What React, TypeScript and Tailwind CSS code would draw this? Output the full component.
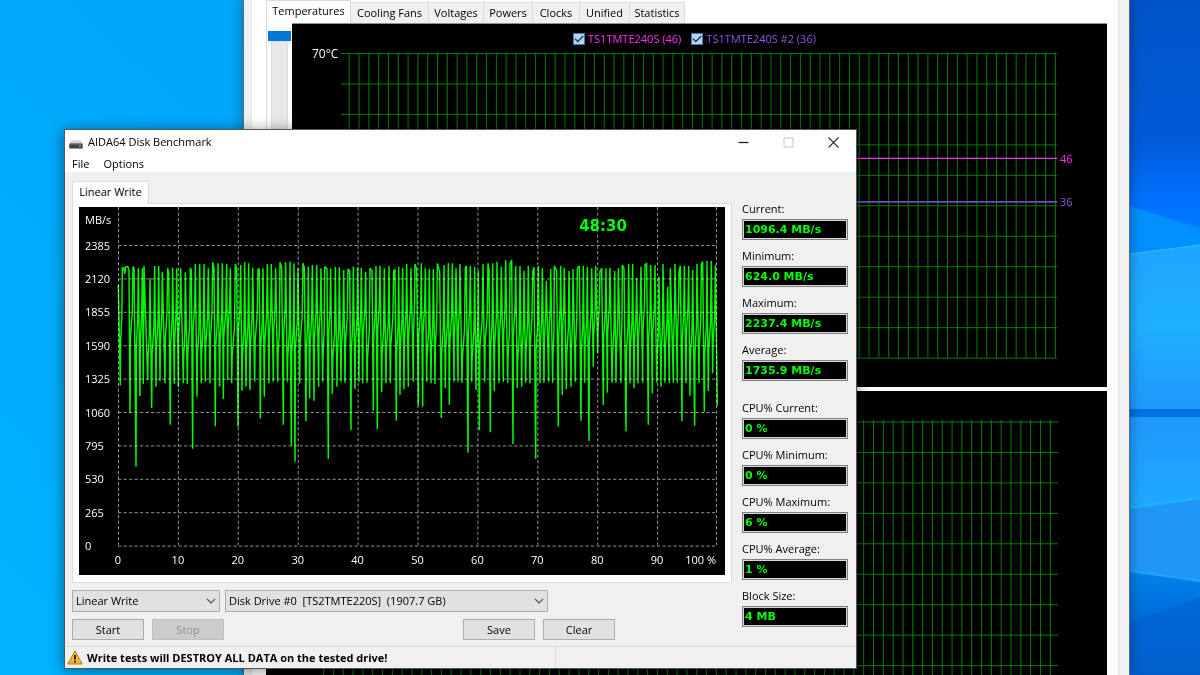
import { ReactNode } from "react"

type Point = [number, number]

const sensorTabs = [
  { name: "Cooling Fans", width: "w-[78px]" },
  { name: "Voltages", width: "w-[55px]" },
  { name: "Powers", width: "w-[49px]" },
  { name: "Clocks", width: "w-[47px]" },
  { name: "Unified", width: "w-[50px]" },
  { name: "Statistics", width: "w-[55px]" },
]

const speedStats = [
  { label: "Current:", value: "1096.4 MB/s" },
  { label: "Minimum:", value: "624.0 MB/s" },
  { label: "Maximum:", value: "2237.4 MB/s" },
  { label: "Average:", value: "1735.9 MB/s" },
]

const cpuStats = [
  { label: "CPU% Current:", value: "0 %" },
  { label: "CPU% Minimum:", value: "0 %" },
  { label: "CPU% Maximum:", value: "6 %" },
  { label: "CPU% Average:", value: "1 %" },
  { label: "Block Size:", value: "4 MB" },
]

const speedLabels = [2385, 2120, 1855, 1590, 1325, 1060, 795, 530, 265, 0]
const percentLabels = [0, 10, 20, 30, 40, 50, 60, 70, 80, 90]

// write speed samples, three units per chart pixel
const lows: Point[] = [
  [181, 556], [210, 638], [228, 800], [240, 588], [250, 552], [263, 540], [275, 624], [288, 560],
  [300, 543], [315, 550], [331, 674], [343, 552], [355, 560], [370, 550], [382, 552], [398, 746],
  [411, 590], [424, 550], [436, 545], [450, 550], [466, 679], [479, 560], [490, 597], [503, 540],
  [515, 550], [534, 680], [546, 572], [558, 560], [570, 570], [584, 545], [601, 656], [613, 590],
  [627, 550], [640, 545], [653, 545], [670, 674], [682, 545], [694, 738], [705, 785], [719, 550],
  [738, 664], [749, 595], [762, 602], [776, 560], [788, 545], [805, 776], [817, 582], [831, 560],
  [843, 545], [855, 548], [873, 690], [885, 567], [897, 545], [908, 550], [921, 548], [940, 632],
  [952, 687], [965, 576], [978, 550], [991, 548], [1009, 662], [1020, 585], [1032, 568], [1045, 560],
  [1060, 545], [1075, 617], [1088, 620], [1100, 545], [1113, 550], [1125, 552], [1144, 654],
  [1156, 565], [1168, 614], [1182, 545], [1194, 545], [1206, 548], [1224, 758], [1235, 545],
  [1248, 570], [1258, 690], [1274, 545], [1291, 697], [1303, 573], [1317, 548], [1330, 545],
  [1343, 548], [1359, 732], [1372, 564], [1385, 560], [1397, 548], [1410, 550], [1427, 776],
  [1440, 550], [1452, 548], [1466, 545], [1478, 548], [1495, 680], [1507, 585], [1519, 568],
  [1533, 560], [1546, 545], [1563, 662], [1574, 548], [1587, 723], [1600, 500], [1613, 460],
  [1630, 615], [1642, 578], [1656, 548], [1668, 548], [1683, 548], [1698, 694], [1710, 550],
  [1722, 565], [1734, 550], [1748, 548], [1765, 674], [1777, 580], [1790, 548], [1803, 560],
  [1815, 548], [1828, 548], [1840, 548], [1852, 548], [1866, 664], [1878, 550], [1890, 587],
  [1904, 677], [1917, 548], [1933, 635], [1945, 573], [1958, 520], [1972, 617],
]

const highs: Point[] = [
  [175, 255], [187, 204], [191, 203], [194, 222], [197, 200], [204, 200], [207, 212], [219, 200],
  [222, 203], [235, 205], [247, 205], [252, 198], [270, 235], [284, 198], [296, 198], [307, 215],
  [323, 205], [326, 218], [338, 203], [350, 205], [362, 205], [376, 217], [391, 203], [394, 212],
  [406, 192], [419, 192], [432, 192], [445, 205], [458, 187], [462, 205], [474, 190], [487, 190],
  [500, 192], [511, 205], [526, 192], [530, 206], [542, 195], [554, 187], [566, 190], [578, 203],
  [594, 207], [598, 207], [609, 205], [622, 192], [634, 192], [647, 205], [660, 187], [665, 203],
  [677, 187], [690, 185], [702, 190], [714, 205], [729, 190], [733, 203], [745, 200], [757, 195],
  [770, 195], [783, 205], [794, 200], [801, 206], [812, 205], [826, 200], [838, 202], [851, 210],
  [864, 207], [869, 212], [880, 200], [893, 202], [904, 203], [917, 215], [930, 205], [936, 212],
  [948, 198], [960, 198], [973, 205], [987, 198], [1001, 213], [1005, 208], [1016, 200],
  [1028, 203], [1040, 192], [1053, 205], [1065, 192], [1070, 207], [1084, 190], [1096, 205],
  [1108, 207], [1120, 207], [1132, 190], [1139, 215], [1152, 195], [1165, 190], [1177, 190],
  [1188, 205], [1200, 192], [1216, 203], [1219, 198], [1231, 198], [1244, 200], [1255, 212],
  [1269, 192], [1284, 190], [1287, 210], [1298, 190], [1311, 185], [1324, 200], [1337, 180],
  [1350, 190], [1355, 180], [1367, 198], [1380, 198], [1392, 212], [1405, 198], [1418, 215],
  [1422, 202], [1435, 198], [1447, 205], [1459, 243], [1472, 207], [1483, 198], [1490, 212],
  [1502, 198], [1513, 203], [1527, 213], [1539, 207], [1552, 205], [1558, 198], [1570, 198],
  [1582, 200], [1595, 205], [1607, 198], [1620, 215], [1625, 205], [1638, 205], [1650, 203],
  [1664, 213], [1675, 205], [1687, 195], [1692, 205], [1706, 192], [1718, 192], [1730, 235],
  [1743, 200], [1755, 195], [1760, 190], [1772, 195], [1785, 195], [1797, 230], [1809, 192],
  [1823, 260], [1831, 205], [1845, 192], [1857, 215], [1861, 198], [1873, 198], [1886, 198],
  [1898, 210], [1911, 192], [1924, 192], [1928, 185], [1941, 183], [1954, 183], [1966, 195],
]

const samples = [...lows, ...highs].sort((a, b) => a[0] - b[0])

// each climb pauses about half way, so the curve has a small step there
const trace = samples.flatMap((point, i): Point[] => {
  const next = samples[i + 1]
  if (!next || point[1] - next[1] < 150) return [point]
  const width = next[0] - point[0]
  const drift = (i * 37) % 90
  return [
    point,
    [point[0] + width * 0.15, 390 + drift],
    [point[0] + width * 0.75, 310 + drift],
  ]
})

function Wallpaper() {
  return (
    <svg
      className="absolute inset-0 h-full w-full"
      viewBox="0 0 1200 675"
      preserveAspectRatio="none"
      aria-hidden="true"
    >
      <defs>
        <linearGradient id="left" x1="1" y1="0" x2="0" y2="1">
          <stop offset="0" stopColor="#0299ee" />
          <stop offset="0.35" stopColor="#00a5f8" />
          <stop offset="1" stopColor="#00b4ff" />
        </linearGradient>
        <linearGradient id="sky" x1="0" y1="0" x2="0" y2="1">
          <stop offset="0" stopColor="#0054c8" />
          <stop offset="0.6" stopColor="#005bd8" />
          <stop offset="0.85" stopColor="#0070fc" />
          <stop offset="1" stopColor="#0078ff" />
        </linearGradient>
        <linearGradient id="pane" x1="0" y1="0" x2="0" y2="1">
          <stop offset="0" stopColor="#20a4ff" />
          <stop offset="0.5" stopColor="#1eb0ff" />
          <stop offset="1" stopColor="#2098fc" />
        </linearGradient>
        <linearGradient id="pane2" x1="0" y1="0" x2="0" y2="1">
          <stop offset="0" stopColor="#2098fc" />
          <stop offset="1" stopColor="#1eaaff" />
        </linearGradient>
        <linearGradient id="floor" x1="0" y1="0" x2="0" y2="1">
          <stop offset="0" stopColor="#0082ea" />
          <stop offset="0.35" stopColor="#0072e0" />
          <stop offset="1" stopColor="#005cc8" />
        </linearGradient>
      </defs>
      <rect width="700" height="675" fill="url(#left)" />
      <rect x="700" width="500" height="230" fill="url(#sky)" />
      <path d="M1130 206 1200 228V260H1130Z" fill="#0090ff" />
      <path d="M1130 254 1200 245V410H1130Z" fill="url(#pane)" />
      <path d="M1130 254 1200 245" stroke="#2cc0ff" />
      <rect x="1130" y="409" width="70" height="8" fill="#0070e6" />
      <path d="M1130 417H1200V498L1130 508Z" fill="url(#pane2)" />
      <path d="M1130 508 1200 498V582L1130 572Z" fill="#2096f6" />
      <path d="M1130 508 1200 498" stroke="#22b4ff" strokeWidth="2" />
      <path d="M1130 571 1200 581V675H1130Z" fill="url(#floor)" />
      <path d="M1130 622 1200 597V675H1130Z" fill="#0060d0" opacity="0.6" />
      <path d="M1130 571 1200 581" stroke="#22a4fa" strokeWidth="2" />
    </svg>
  )
}

function TemperatureChart() {
  return (
    <svg viewBox="0 -2 816 342" className="block w-full" aria-label="Temperatures">
      <g stroke="#008000">
        {Array.from({ length: 73 }, (_, i) => (
          <path key={i} d={`M${57.3 + i * 9.82} 6V311`} />
        ))}
        {Array.from({ length: 11 }, (_, i) => (
          <path key={i} d={`M49 ${6.5 + i * 30.5}H766`} />
        ))}
      </g>
      <path d="M49 111.5H766" stroke="#ff30f0" strokeWidth="1.2" />
      <path d="M49 155H766" stroke="#7c45c8" strokeWidth="1.8" />
      <text x="20" y="11" fill="#fff" fontSize="12">70°C</text>
      <g fontSize="11">
        <text x="769" y="116" fill="#ff30f0">46</text>
        <text x="769" y="159" fill="#9058e0">36</text>
      </g>
    </svg>
  )
}

function CoolingChart() {
  return (
    <svg viewBox="0 0 841 340" className="block w-full" aria-hidden="true">
      <g stroke="#008000">
        {Array.from({ length: 75 }, (_, i) => (
          <path key={i} d={`M${57.6 + i * 9.82} 29V340`} />
        ))}
        {Array.from({ length: 11 }, (_, i) => (
          <path key={i} d={`M50 ${31 + i * 30.45}H792`} />
        ))}
      </g>
    </svg>
  )
}

function LegendItem({ id, color, children }: { id: string; color: string; children: ReactNode }) {
  return (
    <div className="flex items-center gap-[3px]">
      <span className="relative block h-3 w-3">
        <input
          id={id}
          type="checkbox"
          defaultChecked
          className="peer block h-3 w-3 appearance-none border border-[#3c78b4] bg-[#b4d4f0]"
        />
        <svg
          viewBox="0 0 12 12"
          className="pointer-events-none absolute inset-0 hidden h-3 w-3 peer-checked:block"
          aria-hidden="true"
        >
          <path d="M2 5.8 4.8 8.6 10.2 3" fill="none" stroke="#10406c" strokeWidth="1.4" />
        </svg>
      </span>
      <label htmlFor={id} className={`text-[11px] leading-3 ${color}`}>
        {children}
      </label>
    </div>
  )
}

function SensorWindow() {
  return (
    <section
      aria-label="Sensors"
      className="absolute top-0 right-[70px] bottom-0 left-[243px] flex overflow-hidden border-x border-[#5c6a78] bg-[#f0f0f0] pr-[10px] pl-[7px] shadow-[0_0_12px_rgba(0,0,0,0.35)]"
    >
      <div className="min-w-0 flex-1 border-x border-[#e4e4e4] bg-white pr-[11px] pl-[14px]">
        <div role="tablist" className="flex h-[23px] items-end text-[11px]">
          <button
            role="tab"
            aria-selected="true"
            className="h-[23px] w-[85px] border-x border-t border-[#dcdcdc] bg-white pb-0.5 text-center leading-4"
          >
            Temperatures
          </button>
          {sensorTabs.map((tab) => (
            <button
              key={tab.name}
              role="tab"
              aria-selected="false"
              className={`h-[21px] border-t border-r border-[#dcdcdc] bg-[#f0f0f0] text-center leading-4 ${tab.width}`}
            >
              {tab.name}
            </button>
          ))}
        </div>
        <div className="flex h-[364px] border-l border-[#dcdcdc] pl-px">
          <div className="w-[23px] shrink-0 pt-2">
            <div className="h-[10px] bg-[#0078d7]" />
            <div className="mx-[3px] h-[346px] border border-[#dcdcdc] bg-[#e7e8ea]" />
          </div>
          <div className="ml-px min-w-0 flex-1 border-t border-[#909090] bg-black">
            <div className="flex h-[21px] items-end justify-center gap-[10px] pr-[10px]">
              <LegendItem id="drive-1" color="text-[#ff30f0]">
                TS1TMTE240S (46)
              </LegendItem>
              <LegendItem id="drive-2" color="text-[#9058e0]">
                TS1TMTE240S #2 (36)
              </LegendItem>
            </div>
            <TemperatureChart />
          </div>
        </div>
        <div className="mt-1 h-full bg-black">
          <CoolingChart />
        </div>
      </div>
    </section>
  )
}

function BenchmarkChart() {
  return (
    <svg viewBox="0 0 646 368" className="block w-full bg-black" aria-label="Linear Write">
      <g transform="translate(-19 -7) scale(0.33333)">
        <polyline
          points={trace.map((p) => p.join(",")).join(" ")}
          fill="none"
          stroke="#00f800"
          strokeWidth="4.4"
          strokeLinejoin="bevel"
        />
      </g>
      <g stroke="#909090" strokeDasharray="3.3 2.2" className="mix-blend-screen">
        {Array.from({ length: 11 }, (_, i) => (
          <path key={i} d={`M${i === 10 ? 637.5 : 39.5 + i * 59.9} 0V338`} />
        ))}
        {speedLabels.map((speed, i) => (
          <path key={speed} d={`M39 ${38.5 + i * 33.4}H638`} />
        ))}
      </g>
      <g fill="#fff" fontSize="11">
        <text x="6" y="17">MB/s</text>
        {speedLabels.map((speed, i) => (
          <text key={speed} x="6" y={42.5 + i * 33.4}>
            {speed}
          </text>
        ))}
        {percentLabels.map((percent, i) => (
          <text key={percent} x={39 + i * 59.9} y="357" textAnchor="middle">
            {percent}
          </text>
        ))}
        <text x="637" y="357" textAnchor="end">100 %</text>
      </g>
      <text
        x="524"
        y="24"
        textAnchor="middle"
        fill="#00ff00"
        fontSize="15"
        fontWeight="bold"
        className="font-['DejaVu_Sans',sans-serif]"
      >
        48:30
      </text>
    </svg>
  )
}

function Stat({ label, value }: { label: string; value: string }) {
  const id = label.toLowerCase().replace(/[^a-z]+/g, "-")
  return (
    <div>
      <label htmlFor={id} className="mb-0.5 block leading-4">
        {label}
      </label>
      <output
        id={id}
        className="block h-[21px] border border-[#808080] bg-black pl-0.5 font-['DejaVu_Sans',sans-serif] text-[11px] leading-[19px] font-bold text-[#00ff00] ring-1 ring-[#d8d8d8] ring-inset"
      >
        {value}
      </output>
    </div>
  )
}

function Dropdown({ label, value, width }: { label: string; value: string; width: string }) {
  return (
    <div className={`relative ${width}`}>
      <select
        aria-label={label}
        className="block h-[22px] w-full appearance-none border border-[#adadad] bg-[#e1e1e1] pl-[3px] leading-4"
      >
        <option>{value}</option>
      </select>
      <svg
        viewBox="0 0 10 6"
        className="pointer-events-none absolute top-2 right-1 h-[6px] w-[10px]"
        aria-hidden="true"
      >
        <path d="M1 1 5 5 9 1" fill="none" stroke="#505050" strokeWidth="1.1" />
      </svg>
    </div>
  )
}

function PushButton({ children, disabled }: { children: ReactNode; disabled?: boolean }) {
  return (
    <button
      disabled={disabled}
      className="h-[21px] w-[72px] border border-[#adadad] bg-[#e1e1e1] leading-4 disabled:border-[#bfbfbf] disabled:bg-[#cccccc] disabled:text-[#909090]"
    >
      {children}
    </button>
  )
}

function DiskWindow() {
  return (
    <section
      aria-label="AIDA64 Disk Benchmark"
      className="absolute top-[129px] left-16 w-[793px] border border-[#50565c] bg-[#f0f0f0] text-[11px] shadow-[0_2px_14px_rgba(0,0,0,0.45)]"
    >
      <header className="flex h-6 items-center bg-white pl-1">
        <svg viewBox="0 0 14 9" className="mt-1 h-[9px] w-[14px]" aria-hidden="true">
          <path d="M2.2 0.5H11.8L13.6 4H0.4Z" fill="#cfd2d4" />
          <rect x="0.3" y="3.6" width="13.4" height="4.8" rx="0.6" fill="#3c4144" />
          <path d="M1 4.3H13" stroke="#73787b" strokeWidth="0.7" />
          <rect x="10" y="5.4" width="2" height="1.6" fill="#30d040" />
        </svg>
        <h1 className="ml-[5px] flex-1 leading-4">AIDA64 Disk Benchmark</h1>
        <button aria-label="Minimize" className="grid h-6 w-[45px] place-items-center">
          <svg viewBox="0 0 11 11" className="h-[11px] w-[11px]" aria-hidden="true">
            <path d="M0.5 5.5H10.5" stroke="#222" strokeWidth="1.3" />
          </svg>
        </button>
        <button aria-label="Maximize" disabled className="grid h-6 w-[45px] place-items-center">
          <svg viewBox="0 0 11 11" className="h-[11px] w-[11px]" aria-hidden="true">
            <path d="M1 1H10V10H1Z" fill="none" stroke="#c4c4c4" />
          </svg>
        </button>
        <button aria-label="Close" className="grid h-6 w-[45px] place-items-center">
          <svg viewBox="0 0 11 11" className="h-[11px] w-[11px]" aria-hidden="true">
            <path d="M0.5 0.5 10.5 10.5M10.5 0.5 0.5 10.5" stroke="#333" strokeWidth="1.1" />
          </svg>
        </button>
      </header>
      <nav className="flex h-[18px] gap-[14px] bg-white pl-[7px] leading-5">
        <button>File</button>
        <button>Options</button>
      </nav>

      <div className="flex gap-[10px] pr-2 pl-[7px]">
        <div className="min-w-0 flex-1 pt-[9px]">
          <button
            role="tab"
            aria-selected="true"
            className="relative z-10 -mb-px block h-[23px] w-[77px] border border-b-0 border-[#dcdcdc] bg-white pb-0.5 text-center leading-4"
          >
            Linear Write
          </button>
          <div className="border border-[#dcdcdc] bg-white px-[6px] pt-[3px] pb-[7px]">
            <BenchmarkChart />
          </div>
          <div className="mt-[7px] flex gap-[5px]">
            <Dropdown label="Test" value="Linear Write" width="w-[148px]" />
            <Dropdown
              label="Drive"
              value={"Disk Drive #0\u00a0 [TS2TMTE220S]\u00a0 (1907.7 GB)"}
              width="w-[323px]"
            />
          </div>
          <div className="mt-[7px] flex gap-2 pr-[117px]">
            <PushButton>Start</PushButton>
            <PushButton disabled>Stop</PushButton>
            <div className="flex-1" />
            <PushButton>Save</PushButton>
            <PushButton>Clear</PushButton>
          </div>
        </div>
        <div className="w-[106px] pt-[29px]">
          <div className="flex flex-col gap-2">
            {speedStats.map((stat) => (
              <Stat key={stat.label} {...stat} />
            ))}
          </div>
          <div className="mt-[19px] flex flex-col gap-2">
            {cpuStats.map((stat) => (
              <Stat key={stat.label} {...stat} />
            ))}
          </div>
        </div>
      </div>

      <footer className="mt-[6px] flex h-[22px] items-center border-t border-[#dcdcdc] pl-0.5">
        <svg viewBox="0 0 16 15" className="h-[15px] w-4" aria-hidden="true">
          <path
            d="M8 1 15.2 14H0.8Z"
            fill="#fbb829"
            stroke="#b87818"
            strokeWidth="1"
            strokeLinejoin="round"
          />
          <path d="M8 5V9.6M8 10.8V12.6" stroke="#111" strokeWidth="1.8" />
        </svg>
        <p className="ml-1 w-[468px] font-bold leading-4">
          Write tests will DESTROY ALL DATA on the tested drive!
        </p>
        <div className="h-full border-l border-[#dcdcdc]" />
      </footer>
    </section>
  )
}

export default function App() {
  return (
    <main className="relative min-h-screen overflow-hidden bg-[#00a5f8] font-['Open_Sans','Noto_Sans',sans-serif] text-black">
      <Wallpaper />
      <SensorWindow />
      <DiskWindow />
    </main>
  )
}
